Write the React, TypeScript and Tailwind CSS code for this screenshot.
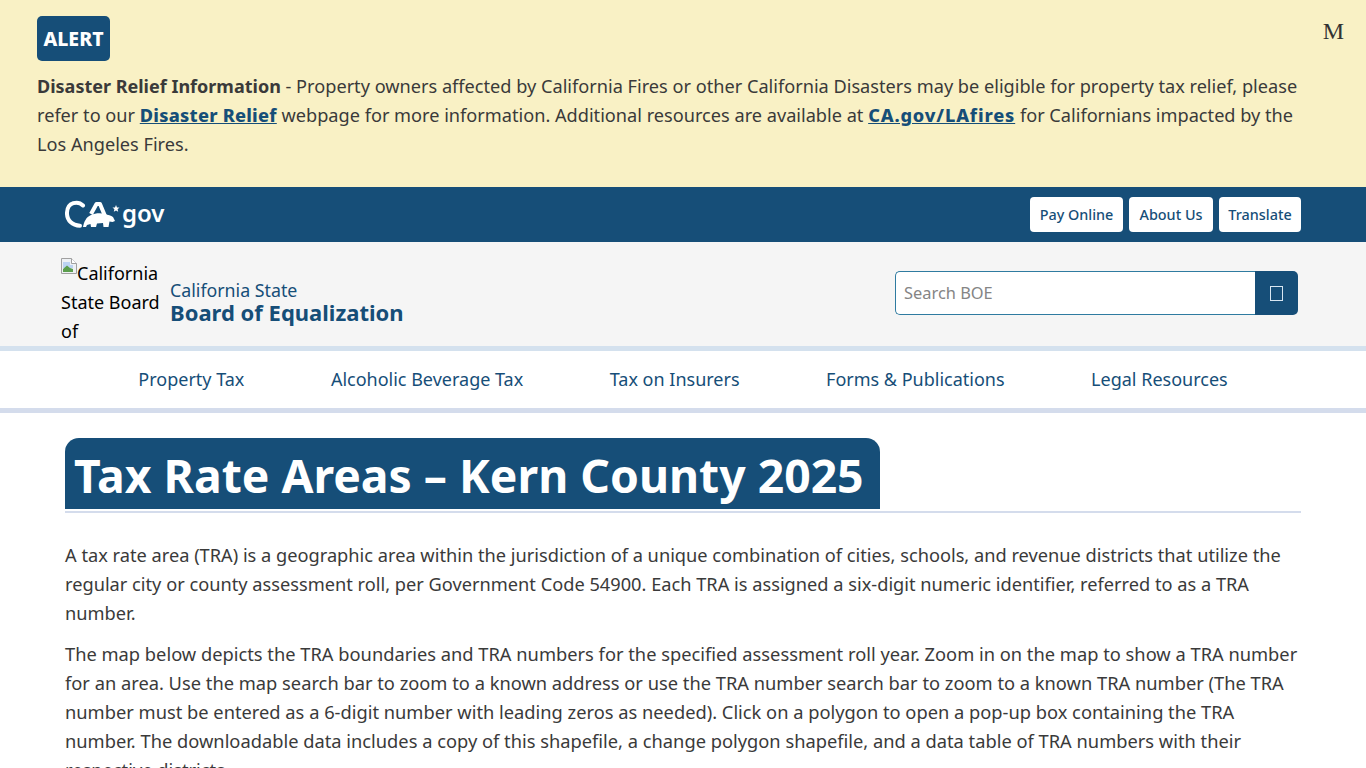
import React from 'react';

const font = { fontFamily: '"Noto Sans", sans-serif' };

const CaGovLogo = () => (
  <div className="flex items-center w-[101px] h-[32px]">
    <svg width="58" height="32" viewBox="0 0 58 32" fill="none">
      {/* C */}
      <path d="M18 6.500C13 1.500 2.500 3 2 13.500c-.4 8 5.500 13 13 13.200" stroke="#fff" strokeWidth="4" strokeLinecap="round" />
      {/* A */}
      <path d="M26 15 31.500 5h3.500l5 12" stroke="#fff" strokeWidth="4" strokeLinejoin="round" />
      {/* bear */}
      <path d="M18 28c1-5 3-10 8-12 4-2 10-2.500 14-1 3 1 6 1.500 8 3l2 4-2.500 1-3-.5-1 5.500h-5l-.5-4-6 .5-1 3.500h-5l-.5-3-3.500 1-1 2z" fill="#fff" />
      {/* star */}
      <path d="m51 6 1 2.400 2.500.2-1.900 1.600.6 2.500-2.200-1.300-2.200 1.300.6-2.500-1.900-1.600 2.500-.2z" fill="#fff" />
    </svg>
    <span className="text-white text-[24px] leading-none font-semibold -ml-[1px] -mt-[3px]">gov</span>
  </div>
);

const BrokenImage = () => (
  <svg width="16" height="16" viewBox="0 0 16 16" className="inline-block align-[6px]">
    <path d="M.5.5h10l5 5v10H.5z" fill="#eef1f4" stroke="#a0a0a0" />
    <path d="M10.500.5v5h5" fill="#fff" stroke="#a0a0a0" />
    <path d="M2 4h7v3h3v3H2z" fill="#bcd3f2" />
    <path d="M2 14v-3l4-3.500 3 2.500 3 1v3z" fill="#5b9e4d" />
  </svg>
);

const topLinks = [
  { label: 'Pay Online', width: 'w-[93px]' },
  { label: 'About Us', width: 'w-[84px]' },
  { label: 'Translate', width: 'w-[82px]' },
];
const navLinks = ['Property Tax', 'Alcoholic Beverage Tax', 'Tax on Insurers', 'Forms & Publications', 'Legal Resources'];

export default function App() {
  return (
    <div className="h-[768px] overflow-hidden bg-white text-[18px] leading-[29px] text-[#3a3a3a]" style={font}>
      {/* Alert */}
      <div className="relative h-[187px] bg-[#f9f1c5] pl-[37px] pr-[60px] pt-[16px]">
        <span className="block w-[73px] h-[45px] rounded-[5px] bg-[#164e78] text-white font-extrabold text-[19.500px] leading-[46px] text-center">ALERT</span>
        <p className="mt-[11px] w-[1275px] text-[18.170px]">
          <strong className="font-bold text-[18px]">Disaster Relief Information</strong> - Property owners affected by California Fires or other California Disasters may be eligible for property tax relief, please refer to our <a className="font-extrabold tracking-[0.25px] text-[#164e78] underline">Disaster Relief</a> webpage for more information. Additional resources are available at <a className="font-extrabold tracking-[0.85px] text-[#164e78] underline">CA.gov/LAfires</a> for Californians impacted by the Los Angeles Fires.
        </p>
        <span className="absolute right-[22px] top-[16px] text-[24px] leading-[30px] text-[#333333]" style={{ fontFamily: '"Liberation Serif", serif' }}>M</span>
      </div>

      {/* CA.gov bar */}
      <div className="h-[55px] bg-[#164e78] pl-[65px] pr-[65px] flex items-center justify-between">
        <CaGovLogo />
        <div className="flex gap-[6px]">
          {topLinks.map((link) => (
            <a key={link.label} className={`${link.width} h-[35px] rounded-[4px] bg-white text-center text-[#164e78] text-[14.400px] font-medium leading-[35px]`}>{link.label}</a>
          ))}
        </div>
      </div>

      {/* Site header */}
      <div className="h-[109px] bg-[#f5f5f5] border-b-[5px] border-[#d4e1ee] pl-[61px] pr-[68px] pt-[16px] flex justify-between">
        <div className="flex items-start">
          <div className="w-[100px] h-[87px] overflow-hidden text-black text-[18px] leading-[29px]">
            <BrokenImage />California State Board of Equalization
          </div>
          <div className="ml-[9px] pt-[21px] text-[#164e78]">
            <div className="text-[17.800px] leading-[22px]">California State</div>
            <div className="text-[22px] leading-[22px] font-bold">Board of Equalization</div>
          </div>
        </div>
        <div className="flex h-[44px] mt-[13px]">
          <div className="w-[360px] border border-[#2f7ba0] border-r-0 rounded-l-[5px] bg-white pl-[8px] text-[#858585] text-[16.400px] leading-[42px]">Search BOE</div>
          <div className="w-[43px] rounded-r-[5px] bg-[#164e78] flex items-center justify-center">
            <span className="block w-[13px] h-[15px] border border-[#d8e6f2]"></span>
          </div>
        </div>
      </div>

      {/* Main nav */}
      <nav className="h-[62px] border-b-[5px] border-[#d4dcec] flex justify-center gap-[86.500px] text-[#164e78] leading-[57px]">
        {navLinks.map((label) => (
          <a key={label}>{label}</a>
        ))}
      </nav>

      {/* Content */}
      <main className="px-[65px] pt-[25px]">
        <div className="border-b-2 border-[#d4dcec] h-[75px]">
          <h1 className="inline-block h-[71px] w-[815px] rounded-t-[14px] bg-[#164e78] pl-[9px] text-white text-[46.300px] leading-[75px] font-bold whitespace-nowrap">Tax Rate Areas – Kern County 2025</h1>
        </div>
        <p className="mt-[28px] text-[18.230px]">
          A tax rate area (TRA) is a geographic area within the jurisdiction of a unique combination of cities, schools, and revenue districts that utilize the regular city or county assessment roll, per Government Code 54900. Each TRA is assigned a six-digit numeric identifier, referred to as a TRA number.
        </p>
        <p className="mt-[11px] text-[18.300px]">
          The map below depicts the TRA boundaries and TRA numbers for the specified assessment roll year. Zoom in on the map to show a TRA number for an area. Use the map search bar to zoom to a known address or use the TRA number search bar to zoom to a known TRA number (The TRA number must be entered as a 6-digit number with leading zeros as needed). Click on a polygon to open a pop-up box containing the TRA number. The downloadable data includes a copy of this shapefile, a change polygon shapefile, and a data table of TRA numbers with their respective districts.
        </p>
      </main>
    </div>
  );
}
